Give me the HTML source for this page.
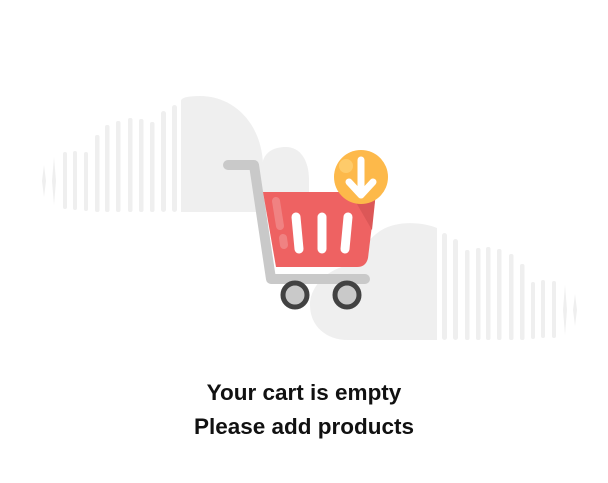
<!DOCTYPE html>
<html><head><meta charset="utf-8"><style>
html,body{margin:0;padding:0;background:#fff;width:608px;height:483px;overflow:hidden}
svg{position:absolute;left:0;top:0}
.t{position:absolute;left:0;width:608px;text-align:center;font-family:"Liberation Sans",sans-serif;font-weight:bold;font-size:22.5px;color:#111;line-height:24px}
</style></head><body>
<svg width="608" height="483" viewBox="0 0 608 483">
<g fill="#efefef">
<path d="M181,212 L181,101 Q181,96 200,96 C235,96 262,125 263,165 L263,212 Z"/>
<path d="M262,212 V168 C262,152 274,147 286,147 C300,147 309,160 309,180 V212 Z"/>
<path d="M437,340 V228 C420,221 395,221 380,231 C366,241 359,253 356,264 C330,266 310,285 310,305 C310,326 326,340 348,340 Z"/>
<g>
<path d="M44,165 L46,181 L44,197 L42,181 Z"/>
<path d="M54,157 L56,181 L54,205 L52,181 Z"/>
<rect x="63" y="152" width="4" height="57" rx="2"/>
<rect x="73" y="151" width="4" height="59" rx="2"/>
<rect x="84" y="152" width="4" height="59" rx="2"/>
<rect x="95" y="135" width="4.5" height="77" rx="2"/>
<rect x="105" y="125" width="4.5" height="87" rx="2"/>
<rect x="116" y="121" width="4.5" height="91" rx="2"/>
<rect x="128" y="118" width="4.5" height="94" rx="2"/>
<rect x="139" y="119" width="4.5" height="93" rx="2"/>
<rect x="150" y="122" width="4.5" height="90" rx="2"/>
<rect x="161" y="111" width="5" height="101" rx="2.5"/>
<rect x="172" y="105" width="5" height="107" rx="2.5"/>
<rect x="442" y="233" width="5" height="107" rx="2.5"/>
<rect x="453" y="239" width="5" height="101" rx="2.5"/>
<rect x="465" y="250" width="4.5" height="90" rx="2"/>
<rect x="476" y="248" width="4.5" height="92" rx="2"/>
<rect x="486" y="247" width="4.5" height="93" rx="2"/>
<rect x="497" y="249" width="4.5" height="91" rx="2"/>
<rect x="509" y="254" width="4.5" height="86" rx="2"/>
<rect x="520" y="264" width="4.5" height="76" rx="2"/>
<rect x="531" y="282" width="4" height="57" rx="2"/>
<rect x="541" y="280" width="4" height="58" rx="2"/>
<rect x="552" y="281" width="4" height="57" rx="2"/>
<path d="M565,285 L567,310 L565,335 L563,310 Z"/>
<path d="M575,294 L577,310 L575,326 L573,310 Z"/>
</g>
</g>
<g stroke="#c9c9c9" stroke-linecap="round" fill="none">
<path d="M228,165 H254 L271,279 H365" stroke-width="10" stroke-linejoin="round"/>
</g>
<path d="M263,192 H376 L368,258 Q366,267 357,267 H276 Z" fill="#ee6262"/>
<path d="M350,192 H376 L372,230 Z" fill="#dc5757"/>
<g stroke="#f08282" stroke-linecap="round">
<line x1="276" y1="201" x2="280" y2="226" stroke-width="8"/>
<line x1="283" y1="238" x2="284" y2="245" stroke-width="8"/>
</g>
<g stroke="#fff" stroke-width="9" stroke-linecap="round">
<line x1="296" y1="217" x2="299" y2="249"/>
<line x1="322" y1="217" x2="322" y2="249"/>
<line x1="348" y1="217" x2="345" y2="249"/>
</g>
<g fill="#c9c9c9" stroke="#424242" stroke-width="5">
<circle cx="295" cy="295" r="12"/>
<circle cx="347" cy="295" r="12"/>
</g>
<circle cx="361" cy="177" r="27" fill="#fdb94a"/>
<circle cx="346" cy="166" r="7" fill="#fecb6a"/>
<g stroke="#fff" stroke-width="7" stroke-linecap="round" stroke-linejoin="round" fill="none">
<path d="M361,160 V194 M349,182 L361,195 L373,182"/>
</g>
</svg>
<div class="t" style="top:381px">Your cart is empty</div>
<div class="t" style="top:415px">Please add products</div>
</body></html>
